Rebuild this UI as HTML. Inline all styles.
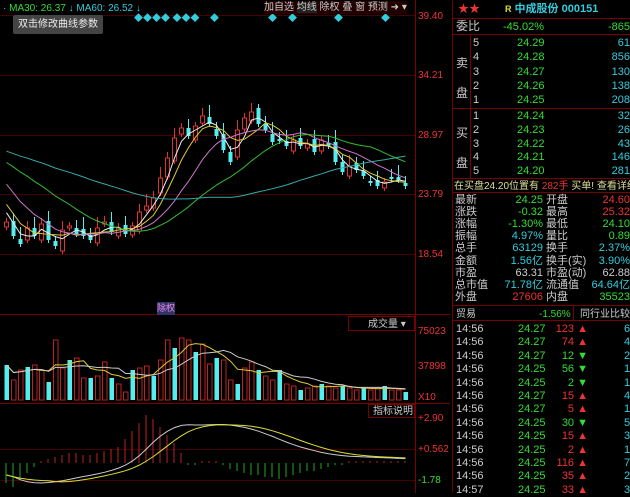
<!DOCTYPE html>
<html><head><meta charset="utf-8"><style>
body{margin:0;width:630px;height:493px;background:#000;overflow:hidden;font-family:"Liberation Sans","Noto Sans CJK SC",sans-serif;position:relative}
.a{position:absolute;white-space:nowrap;font-size:11px;line-height:13px}
.g{color:#3d3}.c{color:#3cd}.r{color:#e33}.w{color:#ccc}.y{color:#dd3}
</style></head><body>
<svg id="s" width="630" height="493" style="position:absolute;left:0;top:0">
<g stroke="#700" stroke-width="1" fill="none">
<line x1="0" y1="15.5" x2="415" y2="15.5" stroke="#400"/>
<line x1="0" y1="75.5" x2="415" y2="75.5" stroke="#400"/>
<line x1="0" y1="135.5" x2="415" y2="135.5" stroke="#400"/>
<line x1="0" y1="194.5" x2="415" y2="194.5" stroke="#400"/>
<line x1="0" y1="254.5" x2="415" y2="254.5" stroke="#400"/>
<line x1="0" y1="314.5" x2="450" y2="314.5"/>
<line x1="0" y1="403.5" x2="450" y2="403.5"/>
<line x1="0" y1="449.5" x2="415" y2="449.5" stroke="#400"/>
<line x1="0" y1="480.5" x2="415" y2="480.5" stroke="#400"/>
<line x1="415.5" y1="0" x2="415.5" y2="493"/>
<line x1="452.5" y1="0" x2="452.5" y2="493" stroke="#600"/>
<line x1="452" y1="18.5" x2="630" y2="18.5"/>
<line x1="452" y1="34.5" x2="630" y2="34.5"/>
<line x1="452" y1="108.5" x2="630" y2="108.5"/>
<line x1="452" y1="178.5" x2="630" y2="178.5"/>
<line x1="452" y1="192.5" x2="630" y2="192.5"/>
<line x1="452" y1="305.5" x2="630" y2="305.5"/>
<line x1="452" y1="320.5" x2="630" y2="320.5"/>
<line x1="470.5" y1="34" x2="470.5" y2="178"/>
<line x1="573.5" y1="305" x2="573.5" y2="320"/>
<rect x="348.5" y="316.5" width="66" height="14"/>
<rect x="368.5" y="404.5" width="46" height="13"/>
</g>
<g id="cd"></g>
</svg>
<div class="a g" style="left:3px;top:2px;font-size:10px"><span class="c">·</span> MA30: 26.37 <span class="c">↓</span> <span class="c">MA60: 26.52 ↓</span></div>
<div class="a" style="left:13px;top:15px;background:#444;color:#eee;padding:3px 5px;font-size:10px;border-radius:2px">双击修改曲线参数</div>
<div class="a c" style="left:134px;top:12px;font-size:9px">◆◆◆◆ ◆◆◆</div>
<div class="a c" style="left:210px;top:12px;font-size:9px">◆</div>
<div class="a c" style="left:268px;top:12px;font-size:9px">◆</div>
<div class="a c" style="left:288px;top:12px;font-size:9px">◆</div>
<div class="a c" style="left:334px;top:12px;font-size:9px">◆</div>
<div class="a c" style="left:381px;top:12px;font-size:9px">◆</div>
<div class="a w" style="left:264px;top:1px;font-size:10px;background:#200">加自选 <span style="background:#222">均线</span> 除权 叠 窗 预测 ➜ ▾</div>
<div class="a r" style="left:418px;top:10px;font-size:10px">39.40</div>
<div class="a r" style="left:418px;top:69px;font-size:10px">34.21</div>
<div class="a r" style="left:418px;top:129px;font-size:10px">28.97</div>
<div class="a r" style="left:418px;top:188px;font-size:10px">23.79</div>
<div class="a r" style="left:418px;top:248px;font-size:10px">18.54</div>
<div class="a" style="left:157px;top:302px;font-size:9px;color:#e8e;background:#336">除权</div>
<div class="a w" style="left:368px;top:318px;font-size:10px">成交量 ▾</div>
<div class="a r" style="left:418px;top:325px;font-size:10px">75023</div>
<div class="a r" style="left:418px;top:360px;font-size:10px">37898</div>
<div class="a r" style="left:418px;top:391px;font-size:10px">X10</div>
<div class="a w" style="left:373px;top:405px;font-size:10px">指标说明</div>
<div class="a r" style="left:418px;top:412px;font-size:10px">+2.90</div>
<div class="a r" style="left:418px;top:443px;font-size:10px">+0.562</div>
<div class="a g" style="left:418px;top:474px;font-size:10px">-1.78</div>

<div class="a r" style="left:458px;top:3px">★★</div>
<div class="a" style="left:505px;top:3px;color:#3cd;font-weight:bold"><span class="y" style="font-size:9px">R</span> 中成股份 000151</div>
<div class="a w" style="left:456px;top:20px;font-size:12px">委比</div>
<div class="a g" style="left:503px;top:21px">-45.02%</div>
<div class="a g" style="right:0;top:21px">-865</div>
<div id="ob"></div>
<div class="a y" style="left:454px;top:180px;font-size:10px;color:#dd9">在买盘24.20位置有 <span class="r">282手</span> 买单! 查看详细</div>
<div id="st"></div>
<div class="a w" style="left:456px;top:308px;font-size:10px">贸易</div>
<div class="a g" style="left:539px;top:308px;font-size:10px">-1.56%</div>
<div class="a w" style="left:580px;top:308px;font-size:10px">同行业比较</div>
<div id="tr"></div>
<script>
var ob=document.getElementById('ob'),h='';
var sp=['24.29','24.28','24.27','24.26','24.25'],sv=['61','856','130','138','208'];
var bp=['24.24','24.23','24.22','24.21','24.20'],bv=['32','26','43','146','281'];
for(var i=0;i<5;i++){var t=37+i*14.3;h+='<div class="a w" style="left:473px;top:'+t+'px">'+(5-i)+'</div><div class="a g" style="left:517px;top:'+t+'px">'+sp[i]+'</div><div class="a c" style="right:0;top:'+t+'px">'+sv[i]+'</div>';
t=110+i*13.8;h+='<div class="a w" style="left:473px;top:'+t+'px">'+(i+1)+'</div><div class="a g" style="left:517px;top:'+t+'px">'+bp[i]+'</div><div class="a c" style="right:0;top:'+t+'px">'+bv[i]+'</div>';}
h+='<div class="a w" style="left:456px;top:48px;font-size:12px;line-height:30px">卖<br>盘</div><div class="a w" style="left:456px;top:118px;font-size:12px;line-height:30px">买<br>盘</div>';
ob.innerHTML=h;
var st=[['最新','24.25','g','开盘','24.60','r'],['涨跌','-0.32','g','最高','25.32','r'],['涨幅','-1.30%','g','最低','24.10','g'],['振幅','4.97%','c','量比','0.89','g'],['总手','63129','c','换手','2.37%','c'],['金额','1.56亿','c','换手(实)','3.90%','c'],['市盈','63.31','w','市盈(动)','62.88','w'],['总市值','71.78亿','c','流通值','64.64亿','c'],['外盘','27606','r','内盘','35523','g']];
h='';for(i=0;i<9;i++){var t=194+i*12.1,s=st[i];h+='<div class="a w" style="left:455px;top:'+t+'px;font-size:11px">'+s[0]+'</div><div class="a '+s[2]+'" style="right:87px;top:'+t+'px">'+s[1]+'</div><div class="a w" style="left:546px;top:'+t+'px;font-size:11px">'+s[3]+'</div><div class="a '+s[5]+'" style="right:0;top:'+t+'px;background:#000">'+s[4]+'</div>';}
document.getElementById('st').innerHTML=h;
var tr=[['24.27','123',1,'6'],['24.27','74',1,'4'],['24.27','12',0,'2'],['24.25','56',0,'12'],['24.25','2',0,'1'],['24.27','15',1,'4'],['24.27','5',1,'1'],['24.25','30',0,'5'],['24.25','15',1,'3'],['24.25','2',1,'1'],['24.25','116',1,'7'],['24.25','35',1,'2'],['24.25','33',1,'3']];
h='';for(i=0;i<13;i++){var t=323+i*13.4,q=tr[i];h+='<div class="a w" style="left:456px;top:'+t+'px">'+(i==12?'14:57':'14:56')+'</div><div class="a g" style="left:518px;top:'+t+'px">'+q[0]+'</div><div class="a '+(q[2]?'r':'g')+'" style="right:42px;top:'+t+'px">'+q[1]+(q[2]?' <span style="color:#e33">▲</span>':' <span style="color:#3d3">▼</span>')+'</div><div class="a c" style="left:624px;top:'+t+'px">'+q[3]+'</div>';}
document.getElementById('tr').innerHTML=h;
(function(){
var C=[222,236,244,228,236,224,240,246,230,226,234,236,240,228,222,232,228,234,226,212,206,198,178,158,138,128,136,126,116,124,136,150,162,130,118,112,124,130,142,140,146,140,146,144,152,140,146,162,172,166,170,176,182,186,182,178,180,186];
var n=C.length,g='',x,i;
var H=[];for(i=0;i<45;i++)H.push(i<36?140+Math.sin(i)*5:140+(i-35)*8);
var CA=H.concat(C),NH=H.length;
var V=[35,20,30,33,35,30,18,60,32,40,42,22,22,24,38,22,16,8,30,32,34,24,40,60,52,62,60,48,56,36,42,40,20,16,32,38,30,24,20,30,16,14,10,12,14,16,14,12,14,12,10,12,10,12,14,10,10,8];
var M=[-10,-12,-8,-5,-2,1,2,3,4,5,5,4,4,5,6,7,8,12,16,20,24,22,18,14,10,5,-1,-1,1,1,1,-1,-3,-4,-5,-6,-6,-7,-7,-8,-7,-6,-5,-4,-4,-3,-2,-1,-1,1,1,1,1,1,1,1,1,1];
for(i=0;i<n;i++){x=4+i*7;var c=C[i],o=i?C[i-1]+((i*37)%11-5):c+5,up=c<o,tp=Math.min(o,c),bh=Math.max(Math.abs(o-c),2),col=up?'#d33':'#5ee';
g+='<line x1="'+(x+2.5)+'" y1="'+(tp-4-(i*13)%9)+'" x2="'+(x+2.5)+'" y2="'+(tp+bh+3+(i*7)%7)+'" stroke="'+col+'"/>';
g+='<rect x="'+(x+.5)+'" y="'+tp+'" width="4" height="'+bh+'" '+(up?'fill="#000" stroke="#d33"':'fill="#5ee"')+'/>';
var vu=(i*5)%3!=0;g+='<rect x="'+(x+.5)+'" y="'+(400-V[i])+'" width="4.5" height="'+V[i]+'" '+(vu?'fill="none" stroke="#b22"':'fill="#5ee"')+'/>';
var m=M[i];g+='<line x1="'+(x+2)+'" y1="463" x2="'+(x+2)+'" y2="'+(463-m*2)+'" stroke="'+(m>0?'#b22':'#2a2')+'"/>';}
function ma(arr,p,skip){skip=skip||0;var pts=[];for(var i=skip;i<arr.length;i++){var s=0,k=0;for(var j=Math.max(0,i-p+1);j<=i;j++){s+=arr[j];k++;}pts.push((6.5+(i-skip)*7)+','+(s/k).toFixed(1));}return pts.join(' ');}
var L=[[3,'#eee'],[5,'#dc3'],[10,'#c7c'],[20,'#3b3'],[40,'#3aa']];
L.forEach(function(l){g+='<polyline fill="none" stroke="'+l[1]+'" stroke-width="1" points="'+ma(CA,l[0],NH)+'"/>';});
var VV=V.map(function(v){return 400-v;});
g+='<polyline fill="none" stroke="#dc3" points="'+ma(VV,5)+'"/><polyline fill="none" stroke="#ccc" points="'+ma(VV,10)+'"/>';
var D=[],cum=0;for(i=0;i<n;i++){cum+=M[i];D.push(472-cum*0.3+(i>35?(i-35)*0.6:0));}
g+='<polyline fill="none" stroke="#ccc" points="'+ma(D,2)+'"/><polyline fill="none" stroke="#dd3" points="'+ma(D,7)+'"/>';
document.getElementById('cd').innerHTML=g;
})();
</script>
</body></html>
